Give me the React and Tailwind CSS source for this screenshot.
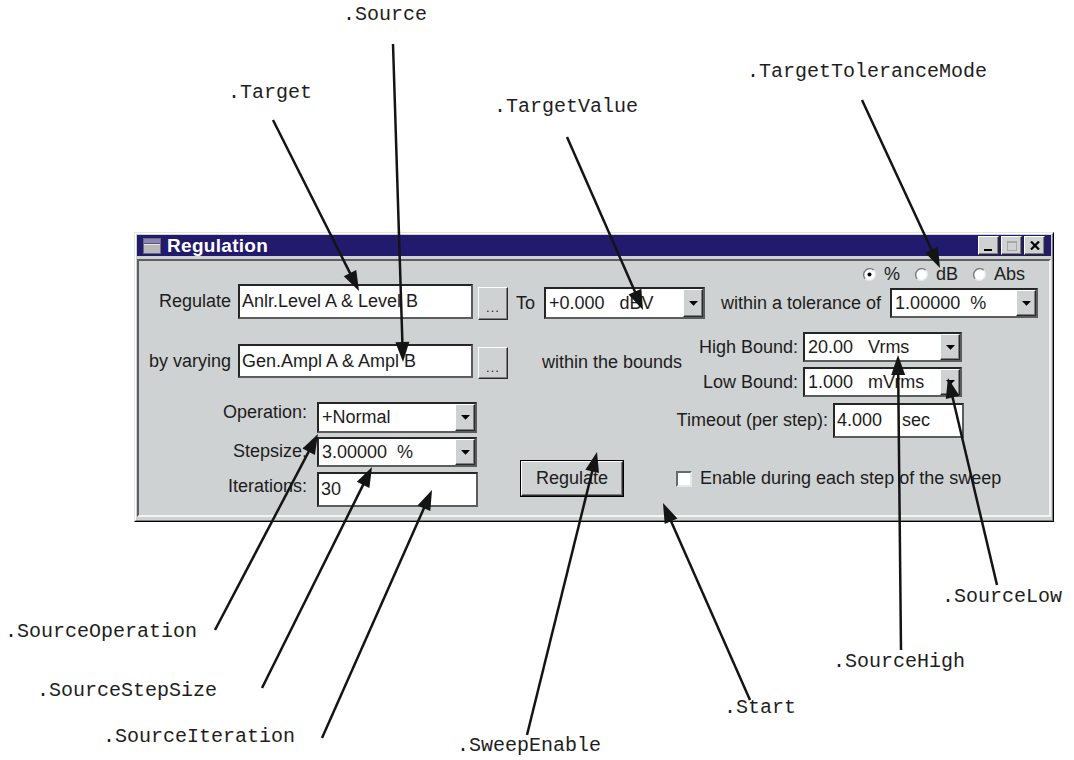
import React from "react";

const RAISED =
  "shrink-0 bg-[#cfd2d2] border border-t-white border-l-white border-b-[#2a2a2a] border-r-[#2a2a2a] shadow-[inset_-1px_-1px_0_#808080]";

function Sunken({ className = "", children }) {
  return (
    <div
      className={`shrink-0 bg-white border-2 border-t-[#262626] border-l-[#262626] border-b-[#5c5c5c] border-r-[#5c5c5c] flex items-center ${className}`}
    >
      {children}
    </div>
  );
}

function TextField({ className, value }) {
  return (
    <Sunken className={className}>
      <span className="pl-[2px] whitespace-pre leading-[21px]">{value}</span>
    </Sunken>
  );
}

function DownArrow() {
  return (
    <svg width="9" height="5" viewBox="0 0 9 5">
      <polygon points="0,0 9,0 4.5,4.8" fill="#000" />
    </svg>
  );
}

function Dropdown({ className, value }) {
  return (
    <Sunken className={`justify-between ${className}`}>
      <span className="pl-[3px] whitespace-pre leading-[21px]">{value}</span>
      <div className={`${RAISED} w-[20px] h-full flex items-center justify-center`}>
        <DownArrow />
      </div>
    </Sunken>
  );
}

function DotsButton({ className }) {
  return (
    <div className={`${RAISED} flex items-center justify-center ${className}`}>
      <span className="text-[13px] leading-none pt-[8px] tracking-[1px]">...</span>
    </div>
  );
}

function Radio({ checked, label }) {
  return (
    <div className="flex items-center gap-[8px]">
      <svg width="13" height="13" viewBox="0 0 13 13">
        <circle cx="6.5" cy="6.5" r="6" fill="#fff" />
        <path d="M2.26 10.74 A6 6 0 0 1 10.74 2.26" stroke="#7a7a7a" strokeWidth="1.4" fill="none" />
        <path d="M10.74 2.26 A6 6 0 0 1 2.26 10.74" stroke="#e8e8e8" strokeWidth="1.4" fill="none" />
        {checked && <circle cx="6.5" cy="6.5" r="2" fill="#000" />}
      </svg>
      <span className="leading-[16px]">{label}</span>
    </div>
  );
}

function TitleButton({ children }) {
  return (
    <div className={`${RAISED} w-[21px] h-[19px] flex items-center justify-center`}>{children}</div>
  );
}

function TitleBar() {
  return (
    <div className="h-[21px] bg-[#221a6c] flex items-center pl-[6px] pr-[6px]">
      <svg width="18" height="16" viewBox="0 0 18 16">
        <rect x="0.5" y="0.5" width="17" height="15" fill="#b9b9bd" stroke="#6b6b70" />
        <rect x="1" y="1" width="16" height="4" fill="#8c84b8" />
        <line x1="1" y1="5.5" x2="17" y2="5.5" stroke="#5a5a66" />
        <line x1="1" y1="6.5" x2="17" y2="6.5" stroke="#e6e6e6" />
      </svg>
      <span className="ml-[6px] text-white font-bold text-[19px] leading-[21px] tracking-[0.3px]">Regulation</span>
      <div className="ml-auto flex gap-[2px]">
        <TitleButton>
          <div className="w-[8px] h-[2px] bg-black mt-[8px] mr-[2px]" />
        </TitleButton>
        <TitleButton>
          <div className="w-[10px] h-[10px] border border-[#a8a8a8] border-t-2" />
        </TitleButton>
        <TitleButton>
          <svg width="10" height="9" viewBox="0 0 10 9">
            <path d="M1 0.5 L9 8.5 M9 0.5 L1 8.5" stroke="#000" strokeWidth="2.2" />
          </svg>
        </TitleButton>
      </div>
    </div>
  );
}

function Panel() {
  return (
    <div className="mt-[3px] mb-[2px] flex-1 border-2 border-t-[#5e5e5e] border-l-[#5e5e5e] border-b-[#f4f4f4] border-r-[#f4f4f4] flex flex-col">
      {/* tolerance mode radios */}
      <div className="mt-[5px] h-[16px] pl-[724px] flex items-center gap-[15px]">
        <Radio checked label="%" />
        <Radio label="dB" />
        <Radio label="Abs" />
      </div>

      {/* Regulate row */}
      <div className="mt-[2px] h-[36px] flex items-start">
        <div className="shrink-0 w-[92px] h-[35px] flex items-center justify-end leading-[21px]">Regulate</div>
        <TextField className="ml-[7px] w-[235px] h-[35px]" value="Anlr.Level A & Level B" />
        <DotsButton className="ml-[5px] mt-[3px] w-[30px] h-[33px]" />
        <span className="shrink-0 ml-[8px] mt-[9px] leading-[21px]">To</span>
        <Dropdown className="ml-[9px] mt-[3px] w-[161px] h-[32px]" value="+0.000   dBV" />
        <span className="shrink-0 ml-[16px] mt-[9px] leading-[21px] whitespace-nowrap">within a tolerance of</span>
        <Dropdown className="ml-[9px] mt-[4px] w-[148px] h-[30px]" value="1.00000  %" />
      </div>

      {/* lower section */}
      <div className="flex">
        <div className="shrink-0 w-[537px] flex flex-col">
          <div className="mt-[24px] h-[35px] flex items-start">
            <div className="shrink-0 w-[92px] h-[34px] flex items-center justify-end leading-[21px] whitespace-nowrap">by varying</div>
            <TextField className="ml-[7px] w-[235px] h-[34px]" value="Gen.Ampl A & Ampl B" />
            <DotsButton className="ml-[5px] mt-[3px] w-[30px] h-[32px]" />
            <span className="shrink-0 ml-[34px] mt-[8px] leading-[21px] whitespace-nowrap">within the bounds</span>
          </div>

          <div className="flex items-start">
            <div className="shrink-0 mt-[23px] flex flex-col">
              <div className="h-[31px] flex items-start">
                <div className="shrink-0 w-[168px] text-right leading-[21px]">Operation:</div>
                <Dropdown className="ml-[10px] w-[160px] h-[31px]" value="+Normal" />
              </div>
              <div className="mt-[4px] h-[30px] flex items-start">
                <div className="shrink-0 w-[168px] text-right leading-[21px] pt-[4px]">Stepsize:</div>
                <Dropdown className="ml-[10px] w-[160px] h-[30px]" value="3.00000  %" />
              </div>
              <div className="mt-[5px] h-[35px] flex items-start">
                <div className="shrink-0 w-[168px] text-right leading-[21px] pt-[4px]">Iterations:</div>
                <TextField className="ml-[10px] w-[161px] h-[35px]" value="30" />
              </div>
            </div>
            <div className="shrink-0 ml-[42px] mt-[81px] w-[104px] h-[37px] border border-black">
              <div className={`${RAISED} h-full flex items-center justify-center leading-[21px]`}>Regulate</div>
            </div>
          </div>
        </div>

        <div className="flex flex-col">
          <div className="mt-[12px] h-[30px] flex items-center">
            <div className="shrink-0 w-[122px] text-right leading-[21px] whitespace-nowrap">High Bound:</div>
            <Dropdown className="ml-[5px] w-[159px] h-[30px]" value="20.00   Vrms" />
          </div>
          <div className="mt-[5px] h-[30px] flex items-center">
            <div className="shrink-0 w-[122px] text-right leading-[21px] whitespace-nowrap">Low Bound:</div>
            <Dropdown className="ml-[5px] w-[159px] h-[30px]" value="1.000   mVrms" />
          </div>
          <div className="mt-[6px] h-[35px] flex items-center">
            <div className="shrink-0 w-[152px] text-right leading-[21px] whitespace-nowrap">Timeout (per step):</div>
            <TextField className="ml-[5px] w-[131px] h-[35px]" value="4.000    sec" />
          </div>
          <div className="mt-[30px] h-[21px] flex items-center">
            <div className="shrink-0 w-[16px] h-[16px] bg-white border-2 border-t-[#6a6a6a] border-l-[#6a6a6a] border-b-[#e8e8e8] border-r-[#e8e8e8]" />
            <span className="ml-[8px] leading-[21px] whitespace-nowrap">Enable during each step of the sweep</span>
          </div>
        </div>
      </div>
    </div>
  );
}

function Window() {
  return (
    <div className="w-[920px] h-[290px] border border-t-[#e4e4e4] border-l-[#e4e4e4] border-b-black border-r-black">
      <div className="h-full border border-t-white border-l-white border-b-[#808080] border-r-[#808080] bg-[#cfd2d2] p-[1px] flex flex-col">
        <TitleBar />
        <Panel />
      </div>
    </div>
  );
}

function Arrow({ x1, y1, x2, y2 }) {
  const dx = x2 - x1;
  const dy = y2 - y1;
  const len = Math.hypot(dx, dy);
  const ux = dx / len;
  const uy = dy / len;
  const L = 20;
  const W = 7;
  const bx = x2 - ux * L;
  const by = y2 - uy * L;
  const px = -uy;
  const py = ux;
  const pts = `${x2},${y2} ${bx + px * W},${by + py * W} ${bx - px * W},${by - py * W}`;
  return (
    <g>
      <line x1={x1} y1={y1} x2={bx + ux * 2} y2={by + uy * 2} stroke="#141414" strokeWidth="2.5" />
      <polygon points={pts} fill="#141414" />
    </g>
  );
}

const ARROWS = [
  [273, 120, 359, 291],
  [393, 44, 403, 362],
  [567, 137, 643, 310],
  [862, 100, 940, 268],
  [215, 630, 318, 434],
  [262, 688, 372, 467],
  [322, 738, 432, 490],
  [527, 735, 597, 452],
  [750, 700, 663, 503],
  [901, 650, 898, 355],
  [997, 585, 948, 378],
];

export default function App() {
  return (
    <div className="relative w-[1074px] h-[760px] bg-white overflow-hidden font-['Liberation_Sans',Arial,sans-serif] text-[18px] text-[#1c1c1c]">
      <div className="pt-[232px] pl-[134px]">
        <Window />
      </div>

      <div className="font-['Liberation_Mono','Courier_New',monospace] text-[20px] leading-[24px] text-[#1e1e1e]">
        <span className="absolute left-[343px] top-[3px]">.Source</span>
        <span className="absolute left-[228px] top-[81px]">.Target</span>
        <span className="absolute left-[494px] top-[95px]">.TargetValue</span>
        <span className="absolute left-[747px] top-[60px]">.TargetToleranceMode</span>
        <span className="absolute left-[5px] top-[620px]">.SourceOperation</span>
        <span className="absolute left-[37px] top-[679px]">.SourceStepSize</span>
        <span className="absolute left-[103px] top-[725px]">.SourceIteration</span>
        <span className="absolute left-[457px] top-[734px]">.SweepEnable</span>
        <span className="absolute left-[724px] top-[696px]">.Start</span>
        <span className="absolute left-[833px] top-[650px]">.SourceHigh</span>
        <span className="absolute left-[942px] top-[585px]">.SourceLow</span>
      </div>

      <svg className="absolute inset-0 pointer-events-none" width="1074" height="760" viewBox="0 0 1074 760">
        {ARROWS.map(([a, b, c, d], i) => (
          <Arrow key={i} x1={a} y1={b} x2={c} y2={d} />
        ))}
      </svg>
    </div>
  );
}
